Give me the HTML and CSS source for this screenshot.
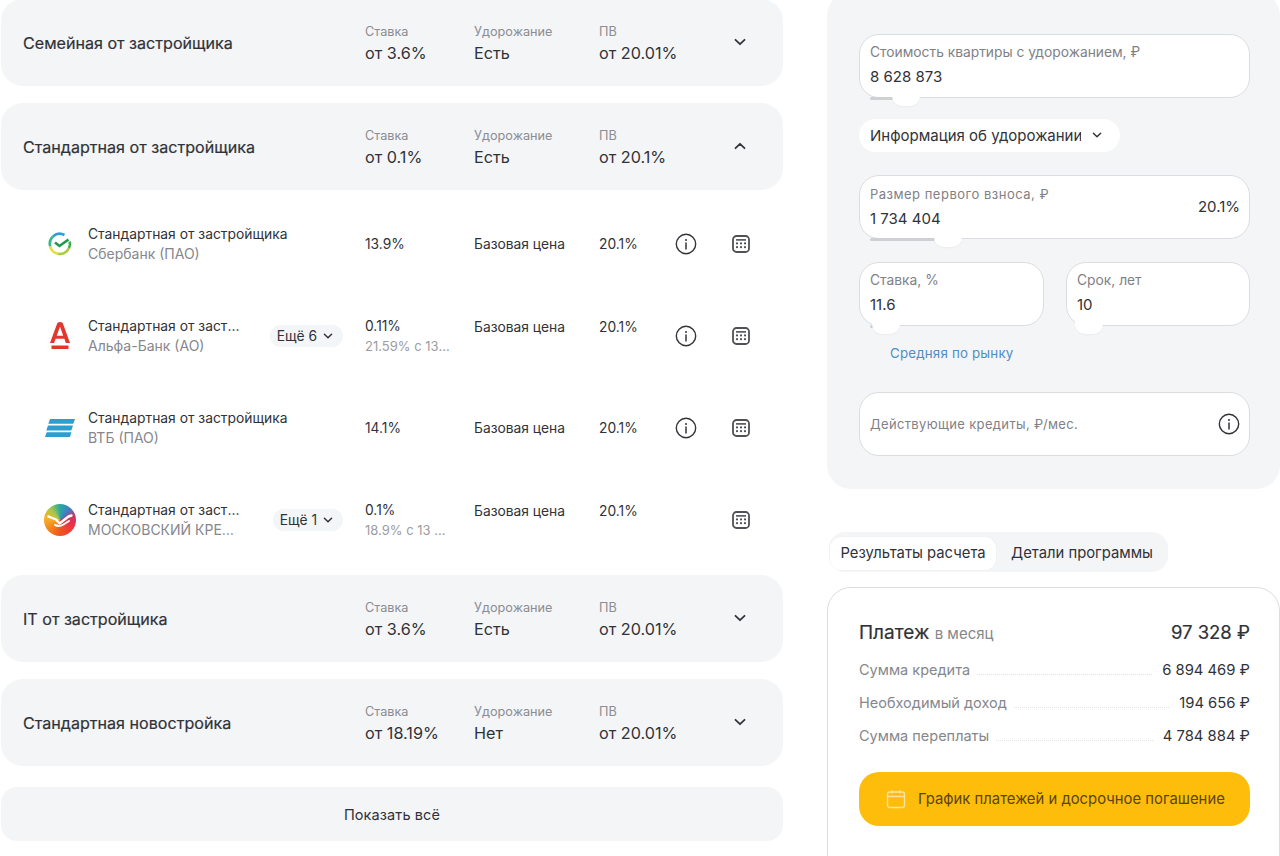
FILE: index.html
```html
<!DOCTYPE html>
<html lang="ru">
<head>
<meta charset="utf-8">
<title>Ипотечные программы</title>
<link rel="stylesheet" href="styles.css">
</head>
<body>
<svg class="defs" width="0" height="0" aria-hidden="true">
  <symbol id="chev" viewBox="0 0 20 20"><path d="M5.500 7.800 10 12.200l4.500-4.400" fill="none" stroke="currentColor" stroke-width="1.800" stroke-linecap="round" stroke-linejoin="round"/></symbol>
  <symbol id="info" viewBox="0 0 22 22"><circle cx="11" cy="11" r="9.700" fill="none" stroke="currentColor" stroke-width="1.400"/><circle cx="11" cy="7" r="1" fill="currentColor"/><path d="M11 10v6" stroke="currentColor" stroke-width="1.500" stroke-linecap="round"/></symbol>
  <symbol id="calc" viewBox="0 0 18 18"><rect x="1" y="1" width="16" height="16" rx="3.500" fill="none" stroke="currentColor" stroke-width="1.800"/><path d="M4 4.900h10" stroke="currentColor" stroke-width="1.600"/><g fill="currentColor"><circle cx="5" cy="8.400" r="1.100"/><circle cx="9" cy="8.400" r="1.100"/><circle cx="13" cy="8.400" r="1.100"/><circle cx="5" cy="12.200" r="1.100"/><circle cx="9" cy="12.200" r="1.100"/><circle cx="13" cy="12.200" r="1.100"/></g></symbol>
</svg>

<main class="programs">
  <section class="card">
    <h2 class="card-title">Семейная от застройщика</h2>
    <div class="stat"><span class="stat-label">Ставка</span><span class="stat-value">от 3.6%</span></div>
    <div class="stat"><span class="stat-label">Удорожание</span><span class="stat-value">Есть</span></div>
    <div class="stat"><span class="stat-label">ПВ</span><span class="stat-value">от 20.01%</span></div>
    <svg class="card-chev"><use href="#chev"/></svg>
  </section>
  <section class="card">
    <h2 class="card-title">Стандартная от застройщика</h2>
    <div class="stat"><span class="stat-label">Ставка</span><span class="stat-value">от 0.1%</span></div>
    <div class="stat"><span class="stat-label">Удорожание</span><span class="stat-value">Есть</span></div>
    <div class="stat"><span class="stat-label">ПВ</span><span class="stat-value">от 20.1%</span></div>
    <svg class="card-chev card-chev--up"><use href="#chev"/></svg>
  </section>

  <div class="rows">
    <div class="row">
      <div class="logo">
        <svg width="26" height="26" viewBox="0 0 26 26" fill="none" stroke-width="2.600">
          <path d="M6 5.500A10 10 0 0 1 17.500 4" stroke="#2a9fd8"/>
          <path d="M3.200 15.500A10 10 0 0 1 6 5.500" stroke="#39b98a"/>
          <path d="M11 22.800A10 10 0 0 1 3.200 15.500" stroke="#e9dc3c"/>
          <path d="M22 17A10 10 0 0 1 11 22.800" stroke="#a6cf3d"/>
          <path d="M22.700 10.500A10 10 0 0 1 22 17" stroke="#3fae49"/>
          <path d="m8 11.500 4.500 3.500 9-6.500" stroke="#1f9a4a"/>
        </svg>
      </div>
      <div class="name"><div class="name-text"><div class="row-title">Стандартная от застройщика</div><div class="row-sub">Сбербанк (ПАО)</div></div></div>
      <div class="cell">13.9%</div>
      <div class="cell">Базовая цена</div>
      <div class="cell">20.1%</div>
      <svg class="ic-info"><use href="#info"/></svg>
      <svg class="ic-calc"><use href="#calc"/></svg>
    </div>

    <div class="row row--double">
      <div class="logo">
        <svg width="20" height="28" viewBox="0 0 20 28"><path d="M10 0h.200c1.600 0 2.500.700 3.100 2.400L20 21h-4.200l-1.400-4.200H5.600L4.100 21H0L6.800 2.400C7.400.700 8.300 0 10 0Zm0 4.700-3.300 9h6.500l-3.100-9h-.100ZM1.500 23.500h17V27h-17z" fill="#e0382e" fill-rule="evenodd"/></svg>
      </div>
      <div class="name">
        <div class="name-text name-text--cut"><div class="row-title">Стандартная от застройщика</div><div class="row-sub">Альфа-Банк (АО)</div></div>
        <button class="more">Ещё 6 <svg><use href="#chev"/></svg></button>
      </div>
      <div class="cell cell--clip"><div>0.11%</div><div class="row-sub row-sub--light">21.59% с 13 месяца</div></div>
      <div class="cell">Базовая цена</div>
      <div class="cell">20.1%</div>
      <svg class="ic-info"><use href="#info"/></svg>
      <svg class="ic-calc"><use href="#calc"/></svg>
    </div>

    <div class="row">
      <div class="logo">
        <svg width="30" height="18" viewBox="0 0 30 18" fill="#2a9fd0"><path d="M5 0h25l-1.700 4.800H3.300zM3 6.600h25l-1.700 4.800H1.300zM1.700 13.200H26.500L25 18H0z"/></svg>
      </div>
      <div class="name"><div class="name-text"><div class="row-title">Стандартная от застройщика</div><div class="row-sub">ВТБ (ПАО)</div></div></div>
      <div class="cell">14.1%</div>
      <div class="cell">Базовая цена</div>
      <div class="cell">20.1%</div>
      <svg class="ic-info"><use href="#info"/></svg>
      <svg class="ic-calc"><use href="#calc"/></svg>
    </div>

    <div class="row row--double">
      <div class="logo">
        <div class="mkb">
          <svg width="32" height="32" viewBox="0 0 32 32" fill="none" stroke="#fff" stroke-linecap="round" stroke-linejoin="round"><path d="M4.500 12.500 12 15.500l3.500 4 9-7 3-1" stroke-width="2.400"/><path d="M11 21c3 1.500 6 1 8.500-.5l5.500-3.500" stroke-width="2"/></svg>
        </div>
      </div>
      <div class="name">
        <div class="name-text name-text--cut"><div class="row-title">Стандартная от застройщика</div><div class="row-sub row-sub--caps">МОСКОВСКИЙ КРЕДИТНЫЙ БАНК</div></div>
        <button class="more">Ещё 1 <svg><use href="#chev"/></svg></button>
      </div>
      <div class="cell cell--clip"><div>0.1%</div><div class="row-sub row-sub--light">18.9% с 13 месяца</div></div>
      <div class="cell">Базовая цена</div>
      <div class="cell">20.1%</div>
      <span></span>
      <svg class="ic-calc"><use href="#calc"/></svg>
    </div>
  </div>

  <section class="card">
    <h2 class="card-title">IT от застройщика</h2>
    <div class="stat"><span class="stat-label">Ставка</span><span class="stat-value">от 3.6%</span></div>
    <div class="stat"><span class="stat-label">Удорожание</span><span class="stat-value">Есть</span></div>
    <div class="stat"><span class="stat-label">ПВ</span><span class="stat-value">от 20.01%</span></div>
    <svg class="card-chev"><use href="#chev"/></svg>
  </section>
  <section class="card">
    <h2 class="card-title">Стандартная новостройка</h2>
    <div class="stat"><span class="stat-label">Ставка</span><span class="stat-value">от 18.19%</span></div>
    <div class="stat"><span class="stat-label">Удорожание</span><span class="stat-value">Нет</span></div>
    <div class="stat"><span class="stat-label">ПВ</span><span class="stat-value">от 20.01%</span></div>
    <svg class="card-chev"><use href="#chev"/></svg>
  </section>
  <button class="show-all">Показать всё</button>
</main>

<aside class="side">
  <section class="panel">
    <div class="field">
      <div class="field-box"><div class="field-label">Стоимость квартиры с удорожанием, ₽</div><div class="field-value">8 628 873</div></div>
      <div class="slider"><span class="track track--a"></span><span class="thumb thumb--a"></span></div>
    </div>
    <button class="info-pill"><span class="info-pill-text">Информация об удорожании</span> <svg><use href="#chev"/></svg></button>
    <div class="field field--down">
      <div class="field-box field-box--split">
        <div><div class="field-label field-label--wide">Размер первого взноса, ₽</div><div class="field-value">1 734 404</div></div>
        <div class="field-side">20.1%</div>
      </div>
      <div class="slider"><span class="track track--b"></span><span class="thumb thumb--b"></span></div>
    </div>
    <div class="pair">
      <div class="field">
        <div class="field-box"><div class="field-label">Ставка, %</div><div class="field-value">11.6</div></div>
        <div class="slider"><span class="track track--c"></span><span class="thumb thumb--c"></span></div>
      </div>
      <div class="field">
        <div class="field-box"><div class="field-label">Срок, лет</div><div class="field-value">10</div></div>
        <div class="slider"><span class="track track--c"></span><span class="thumb thumb--d"></span></div>
      </div>
    </div>
    <a class="market-link">Средняя по рынку</a>
    <div class="field-box field-box--split field-box--plain">
      <div class="field-label">Действующие кредиты, ₽/мес.</div>
      <svg class="ic-info ic-info--dark"><use href="#info"/></svg>
    </div>
  </section>

  <nav class="tabs">
    <span class="tab tab--active">Результаты расчета</span>
    <span class="tab">Детали программы</span>
  </nav>

  <section class="result">
    <div class="pay">
      <div class="pay-title">Платеж <span class="pay-note">в месяц</span></div>
      <div class="pay-sum">97 328 ₽</div>
    </div>
    <div class="line"><span class="line-label">Сумма кредита</span><span class="dots"></span><span class="line-value">6 894 469 ₽</span></div>
    <div class="line"><span class="line-label">Необходимый доход</span><span class="dots"></span><span class="line-value">194 656 ₽</span></div>
    <div class="line"><span class="line-label">Сумма переплаты</span><span class="dots"></span><span class="line-value">4 784 884 ₽</span></div>
    <button class="cta">
      <svg width="20" height="20" viewBox="0 0 20 20" fill="none" stroke="#ffe39a" stroke-width="1.400"><rect x="1.500" y="3" width="17" height="15.500" rx="2.500"/><path d="M1.500 7.500h17M6 1v3.500M14 1v3.500"/></svg>
      График платежей и досрочное погашение
    </button>
  </section>
</aside>
</body>
</html>
```
FILE: styles.css
```css
* { box-sizing: border-box; }
html, body { margin: 0; height: 856px; overflow: hidden; }
body {
  display: flex;
  background: #fff;
  color: #303238;
  font-family: Inter, "Noto Sans", "Liberation Sans", sans-serif;
  font-size: 14px;
}
button { font: inherit; color: inherit; border: 0; }
.defs { position: absolute; }

/* left column */
.programs { width: 782px; margin: -1px 0 0 1px; flex: none; }
.card {
  height: 87px;
  margin-bottom: 17px;
  padding: 0 33px 0 22px;
  display: grid;
  grid-template-columns: 342px 109px 125px 1fr 20px;
  align-items: center;
  background: #f4f5f7;
  border-radius: 22px;
}
.card-title { margin: 0; font-size: 16.100px; font-weight: 400; -webkit-text-stroke: .2px #303238; white-space: nowrap; }
.stat, .stat-label, .stat-value { display: block; }
.stat { padding-top: 2px; }
.stat-label { font-size: 12.700px; line-height: 18px; color: #8b8d92; }
.stat-value { font-size: 16.200px; line-height: 24px; white-space: nowrap; }
.card-chev { width: 20px; height: 20px; color: #33353a; margin-top: -2px; }
.card-chev--up { transform: scaleY(-1); }

.rows { margin-top: -17px; padding-top: 8px; height: 385px; }
.row {
  height: 92px;
  padding-left: 43px;
  display: grid;
  grid-template-columns: 44px 277px 109px 125px 64px 46px 64px;
  align-items: center;
}
.logo { display: flex; justify-content: center; padding-right: 12px; }
.name { display: flex; align-items: center; justify-content: space-between; padding-right: 22px; min-width: 0; }
.name-text { min-width: 0; }
.name-text--cut { width: 152px; }
.row-title, .row-sub { line-height: 20px; white-space: nowrap; overflow: hidden; text-overflow: ellipsis; }
.row-title { font-size: 13.850px; }
.row-sub { font-size: 14px; color: #85878c; }
.row-sub--caps { width: 146px; }
.row-sub--light { font-size: 13px; color: #9b9da1; }
.cell { font-size: 13.800px; line-height: 20px; white-space: nowrap; min-width: 0; }
.row--double .cell { min-height: 38px; }
.cell--clip { padding-right: 23px; }
.ic-info { width: 22px; height: 22px; justify-self: center; color: #33353a; }
.ic-calc { width: 18px; height: 18px; justify-self: center; color: #4f5156; }
.more {
  display: inline-flex; align-items: center; gap: 3px;
  height: 22px; padding: 0 7px;
  background: #f4f5f7; border-radius: 11px; font-size: 13.800px;
  margin-left: auto; white-space: nowrap;
}
.more svg { width: 16px; height: 16px; }
.mkb {
  width: 32px; height: 32px; border-radius: 50%;
  background: conic-gradient(#2aa8a0 0deg, #3d7fc9 40deg, #c03a6a 70deg, #e8304a 105deg, #f0561f 180deg, #f58a1c 235deg, #f5b52a 280deg, #a9c84a 320deg, #2aa8a0 360deg);
}
.mkb svg { display: block; }
.show-all {
  display: block; width: 100%; height: 54px; margin-top: 21px;
  background: #f4f5f7; border-radius: 16px; font-size: 14.500px; letter-spacing: .1px;
}

/* right column */
.side { width: 453px; margin: 0 0 0 44px; flex: none; }
.panel {
  height: 497px; margin-top: -8px; padding: 42px 30px 0 32px;
  background: #f4f5f7; border-radius: 24px;
}
.field-box {
  height: 64px; padding: 8px 9px 0 10px;
  background: #fff; border: 1px solid #dcdde0; border-radius: 20px;
}
.field-box--split { display: flex; justify-content: space-between; align-items: center; padding-top: 0; }
.field-box--plain { margin-top: 30px; }
.field-label { font-size: 13.800px; line-height: 18px; color: #7f8186; white-space: nowrap; }
.field-label--wide { font-size: 13px; letter-spacing: .5px; }
.field-box--plain .field-label { font-size: 13px; letter-spacing: .35px; }
.field-value { margin-top: 6px; font-size: 15px; line-height: 20px; white-space: nowrap; }
.field-side { font-size: 15px; margin-top: -2px; }
.ic-info--dark { color: #303238; }
.slider { position: relative; height: 0; }
.track { position: absolute; top: -1px; left: 11px; height: 3px; background: #cfd0d3; border-radius: 2px; }
.thumb { position: absolute; top: -6px; height: 14px; width: 28px; background: #fff; border-radius: 0 0 10px 10px; box-shadow: 0 1px 2px rgba(0,0,0,.04); }
.track--a { width: 25px; }
.thumb--a { left: 33px; }
.track--b { width: 65px; }
.thumb--b { left: 75px; }
.track--c { width: 10px; }
.thumb--c { left: 13px; }
.thumb--d { left: 9px; }
.info-pill {
  display: flex; align-items: center; justify-content: space-between;
  width: 261px; height: 33px; margin-top: 21px; padding: 0 15px 1px 11px;
  background: #fff; border-radius: 17px; font-size: 15px; white-space: nowrap;
}
.info-pill-text { width: 211px; overflow: hidden; }
.info-pill svg { width: 16px; height: 16px; }
.field--down { margin-top: 23px; }
.pair { display: grid; grid-template-columns: 185px 184px; gap: 22px; margin-top: 23px; }
.market-link { display: block; margin: 18px 0 0 31px; font-size: 13.300px; line-height: 18px; color: #4f8dc9; letter-spacing: .2px; }

.tabs {
  display: inline-flex; align-items: center; gap: 15px;
  height: 40px; margin: 43px 0 0 2px; padding: 0 15px 0 1px;
  background: #f4f5f7; border-radius: 16px;
}
.tab { font-size: 14.800px; white-space: nowrap; margin-top: 1px; }
.tab--active {
  height: 33px; line-height: 33px; padding: 0 10.500px; margin-top: 2px;
  background: #fff; border-radius: 11px; box-shadow: 0 0 2px rgba(0,0,0,.06);
}
.result {
  height: 300px; margin-top: 15px; padding: 28px 29px 0 31px;
  border: 1px solid #dcdde0; border-radius: 24px;
}
.pay { display: flex; justify-content: space-between; align-items: baseline; height: 37px; line-height: 32px; }
.pay-title { font-size: 19px; -webkit-text-stroke: .2px #303238; }
.pay-note { font-size: 15px; color: #85878c; -webkit-text-stroke: 0; }
.pay-sum { font-size: 18.500px; -webkit-text-stroke: .2px #303238; }
.line { display: flex; align-items: baseline; height: 33px; line-height: 33px; }
.line-label { font-size: 14.500px; color: #85878c; white-space: nowrap; }
.line-value { font-size: 14.800px; white-space: nowrap; }
.dots { flex: 1; border-bottom: 1px dotted #e2e3e5; margin: 0 10px 0 7px; }
.cta {
  display: flex; align-items: center; gap: 12px;
  width: 391px; height: 54px; margin-top: 20px; padding: 0 0 0 27px;
  background: #fdbd0a; border-radius: 20px; color: #5b4413; font-size: 14.850px; white-space: nowrap;
}
```
